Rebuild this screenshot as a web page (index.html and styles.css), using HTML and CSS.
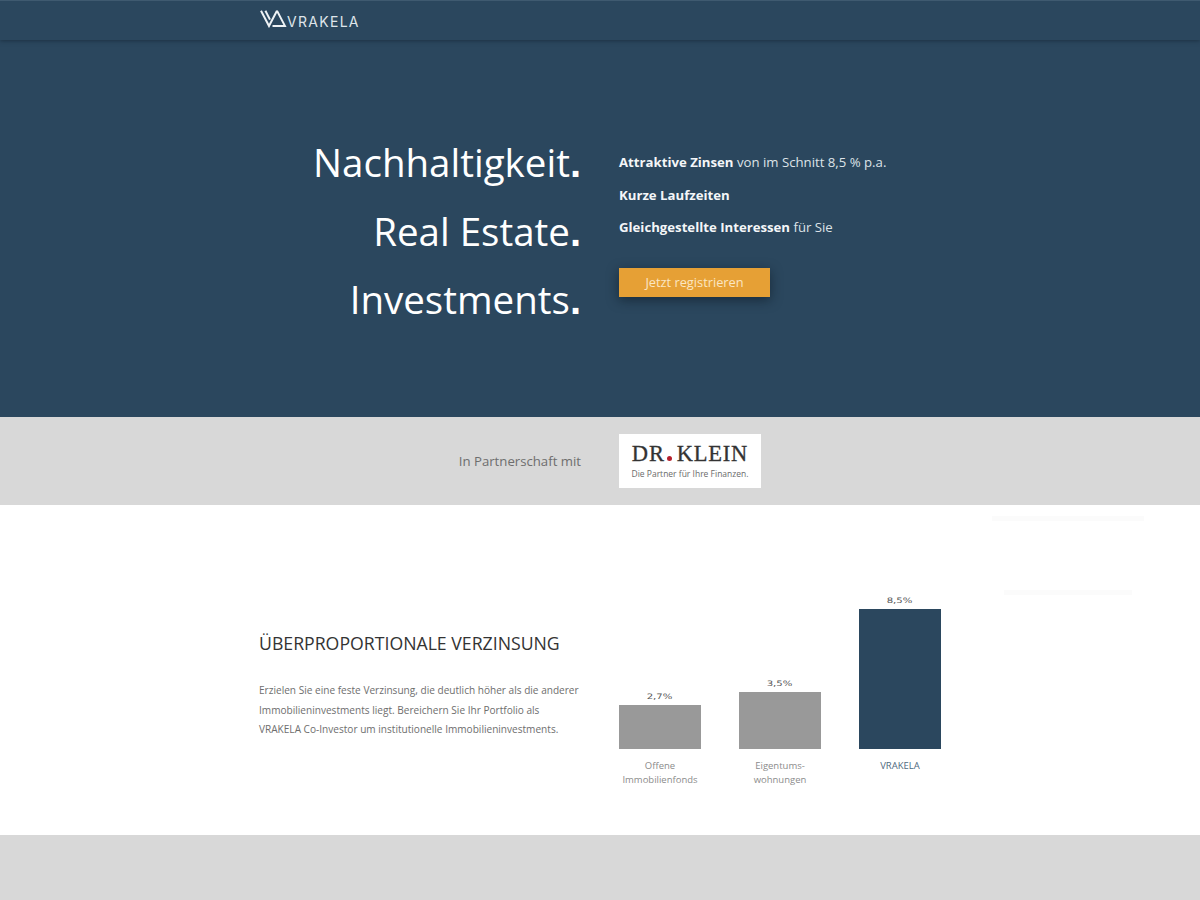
FILE: index.html
```html
<!DOCTYPE html>
<html lang="de">
<head>
<meta charset="UTF-8">
<meta name="viewport" content="width=device-width, initial-scale=1.0">
<title>VRAKELA</title>
<link rel="stylesheet" href="styles.css">
</head>
<body>
<header class="topbar">
	<div class="logo">
		<svg class="logo-mark" width="27" height="18" viewBox="0 0 27 18">
			<path d="M1 0.8 L9 16 L17 0.8" fill="none" stroke="#eef2f5" stroke-width="2"/>
			<path d="M5.4 0.8 L10 9.6" fill="none" stroke="#eef2f5" stroke-width="2"/>
			<path d="M12.5 16 L25 16 L17 0.8" fill="none" stroke="#eef2f5" stroke-width="1.9"/>
		</svg>
		<span class="logo-text">VRAKELA</span>
	</div>
</header>

<section class="hero">
	<div class="hero-titles">
		<h1>Nachhaltigkeit<b>.</b></h1>
		<h1>Real Estate<b>.</b></h1>
		<h1>Investments<b>.</b></h1>
	</div>
	<div class="hero-side">
		<p><b>Attraktive Zinsen</b> von im Schnitt 8,5 % p.a.</p>
		<p><b>Kurze Laufzeiten</b></p>
		<p><b>Gleichgestellte Interessen</b> für Sie</p>
		<a class="cta" href="#">Jetzt registrieren</a>
	</div>
</section>

<section class="partner">
	<div class="partner-label">In Partnerschaft mit</div>
	<div class="partner-logo">
		<div class="klein-name">DR<i class="klein-dot"></i>KLEIN</div>
		<div class="klein-claim">Die Partner für Ihre Finanzen.</div>
	</div>
</section>

<section class="returns">
	<div class="returns-text">
		<h2>ÜBERPROPORTIONALE VERZINSUNG</h2>
		<p>Erzielen Sie eine feste Verzinsung, die deutlich höher als die anderer Immobilieninvestments liegt. Bereichern Sie Ihr Portfolio als VRAKELA Co-Investor um institutionelle Immobilieninvestments.</p>
	</div>
	<div class="chart">
		<div class="col">
			<div class="val"><span>2,7%</span></div>
			<div class="bar bar-a"></div>
			<div class="lbl">Offene<br>Immobilienfonds</div>
		</div>
		<div class="col">
			<div class="val"><span>3,5%</span></div>
			<div class="bar bar-b"></div>
			<div class="lbl">Eigentums-<br>wohnungen</div>
		</div>
		<div class="col">
			<div class="val"><span>8,5%</span></div>
			<div class="bar bar-c"></div>
			<div class="lbl lbl-main">VRAKELA<br>&nbsp;</div>
		</div>
	</div>
	<div class="ghost ghost-top"></div>
	<div class="ghost ghost-bottom"></div>
</section>

<section class="next"></section>
</body>
</html>
```

FILE: styles.css
```css
html, body
{	margin:0;
	padding:0;
	font-family:"Open Sans", Arial, sans-serif;
	background-color:#fff;
	overflow:hidden;
}
.topbar
{	height:40px;
	background-color:#2b475e;
	border-top:1px solid #3f5a70;
	box-sizing:border-box;
	padding-left:260px;
	box-shadow:0 1px 4px rgba(20,35,50,0.6);
	position:relative;
}
.logo
{	display:flex;
	align-items:center;
	height:38px;
}
.logo-mark
{	margin-top:-3px;
}
.logo-text
{	font-family:"Inter", sans-serif;
	font-size:14px;
	letter-spacing:1.3px;
	color:#dfe5ea;
	margin-top:3px;
}
.hero
{	height:377px;
	background-color:#2b475e;
	display:grid;
	grid-template-columns:581px 1fr;
	column-gap:38px;
	color:#fff;
}
.hero-titles
{	padding-top:88px;
	text-align:right;
}
.hero-titles h1
{	margin:0;
	font-size:38.5px;
	line-height:68.5px;
	font-weight:400;
}
.hero-titles b
{	font-family:"Liberation Sans", sans-serif;
	font-weight:700;
	font-size:40px;
	line-height:0;
}
.hero-side
{	padding-top:113px;
	font-size:13.2px;
	color:#dde3e8;
}
.hero-side p
{	margin:0 0 13.5px 0;
	line-height:19px;
}
.hero-side b
{	color:#f4f6f8;
	font-weight:700;
}
.cta
{	display:block;
	width:151px;
	height:29px;
	margin-top:31px;
	background-color:#e6a035;
	color:#fbe6c2;
	font-size:12.8px;
	line-height:29px;
	text-align:center;
	text-decoration:none;
	box-shadow:0 3px 12px rgba(10,20,30,0.55);
}
.partner
{	height:88px;
	background-color:#d8d8d8;
	display:grid;
	grid-template-columns:581px 142px;
	column-gap:38px;
	align-items:center;
}
.partner-label
{	text-align:right;
	font-size:13.2px;
	color:#6e6e6e;
}
.partner-logo
{	background-color:#fff;
	height:54px;
	text-align:center;
	box-sizing:border-box;
	padding-top:8px;
}
.klein-name
{	font-family:"Liberation Serif", serif;
	font-size:22.5px;
	line-height:24px;
	letter-spacing:0.8px;
	color:#333;
	-webkit-text-stroke:0.3px #333;
}
.klein-dot
{	display:inline-block;
	width:5px;
	height:5px;
	margin:0 5px 0 2px;
	border-radius:50%;
	background-color:#b5202d;
}
.klein-claim
{	font-size:8.5px;
	line-height:15px;
	color:#6b6b6b;
}
.returns
{	height:330px;
	display:grid;
	grid-template-columns:322px 322px;
	column-gap:38px;
	padding-left:259px;
	box-sizing:border-box;
	position:relative;
}
.returns-text h2
{	margin:126px 0 0 0;
	font-size:17.7px;
	line-height:24px;
	font-weight:400;
	color:#333;
}
.returns-text p
{	margin:26px 0 0 0;
	font-size:10.08px;
	line-height:19.7px;
	color:#6e6e6e;
}
.chart
{	display:flex;
	gap:38px;
	align-items:flex-end;
	padding-bottom:49px;
}
.col
{	width:82px;
	text-align:center;
}
.val
{	font-family:"DejaVu Sans", sans-serif;
	font-size:7.5px;
	line-height:12px;
	margin-bottom:2px;
	color:#555;
}
.val span
{	display:inline-block;
	transform:scaleX(1.35);
}
.bar
{	background-color:#999;
}
.bar-a
{	height:44px;
}
.bar-b
{	height:57px;
}
.bar-c
{	height:140px;
	background-color:#2b475e;
}
.lbl
{	margin-top:10px;
	font-size:9.5px;
	line-height:13.5px;
	color:#8c8c8c;
}
.lbl-main
{	color:#4f6a80;
}
.ghost
{	position:absolute;
	background-color:#fbfbfb;
	height:5px;
}
.ghost-top
{	left:992px;
	top:11px;
	width:152px;
}
.ghost-bottom
{	left:1004px;
	top:85px;
	width:128px;
}
.next
{	height:65px;
	background-color:#d8d8d8;
}
```
